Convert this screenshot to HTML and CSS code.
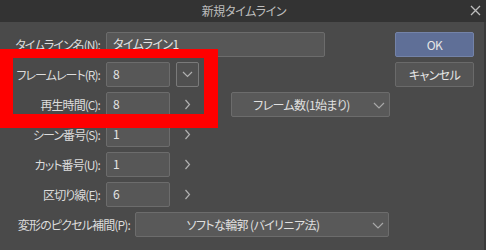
FILE: index.html
```html
<!DOCTYPE html>
<html lang="ja">
<head>
<meta charset="utf-8">
<title>新規タイムライン</title>
<link rel="stylesheet" href="styles.css">
</head>
<body>
<div class="window">
  <div class="titlebar">
    <span class="title">新規タイムライン</span>
    <span class="close">
      <svg width="11" height="11" viewBox="0 0 11 11"><path d="M1 1L10 10M10 1L1 10" stroke="#bdbdbd" stroke-width="1.3" fill="none"/></svg>
    </span>
  </div>
  <div class="content">
    <div class="form">
      <div class="row">
        <label class="label">タイムライン名(N):</label>
        <div class="field wide">タイムライン1</div>
      </div>
      <div class="row">
        <label class="label">フレームレート(R):</label>
        <div class="field num">8</div>
        <div class="iconbtn boxed">
          <svg width="11" height="7" viewBox="0 0 11 7"><path d="M1 1L5.5 5.5L10 1" stroke="#b0b0b0" stroke-width="1.2" fill="none"/></svg>
        </div>
      </div>
      <div class="row">
        <label class="label">再生時間(C):</label>
        <div class="field num">8</div>
        <div class="iconbtn">
          <svg width="7" height="11" viewBox="0 0 7 11"><path d="M1.5 1L5.5 5.5L1.5 10" stroke="#b0b0b0" stroke-width="1.2" fill="none"/></svg>
        </div>
        <div class="select framecount">
          <span class="select-text">フレーム数(1始まり)</span>
          <svg class="arrow" width="12" height="7" viewBox="0 0 12 7"><path d="M1 1L6 6L11 1" stroke="#a8a8a8" stroke-width="1.2" fill="none"/></svg>
        </div>
      </div>
      <div class="row">
        <label class="label">シーン番号(S):</label>
        <div class="field num">1</div>
        <div class="iconbtn">
          <svg width="7" height="11" viewBox="0 0 7 11"><path d="M1.5 1L5.5 5.5L1.5 10" stroke="#b0b0b0" stroke-width="1.2" fill="none"/></svg>
        </div>
      </div>
      <div class="row">
        <label class="label">カット番号(U):</label>
        <div class="field num">1</div>
        <div class="iconbtn">
          <svg width="7" height="11" viewBox="0 0 7 11"><path d="M1.5 1L5.5 5.5L1.5 10" stroke="#b0b0b0" stroke-width="1.2" fill="none"/></svg>
        </div>
      </div>
      <div class="row">
        <label class="label">区切り線(E):</label>
        <div class="field num">6</div>
        <div class="iconbtn">
          <svg width="7" height="11" viewBox="0 0 7 11"><path d="M1.5 1L5.5 5.5L1.5 10" stroke="#b0b0b0" stroke-width="1.2" fill="none"/></svg>
        </div>
      </div>
      <div class="row last">
        <label class="label-free">変形のピクセル補間(P):</label>
        <div class="select interp">
          <span class="select-text">ソフトな輪郭 (バイリニア法)</span>
          <svg class="arrow" width="12" height="7" viewBox="0 0 12 7"><path d="M1 1L6 6L11 1" stroke="#a8a8a8" stroke-width="1.2" fill="none"/></svg>
        </div>
      </div>
    </div>
    <div class="buttons">
      <div class="btn primary">OK</div>
      <div class="btn">キャンセル</div>
    </div>
    <div class="highlight"></div>
  </div>
</div>
</body>
</html>
```

FILE: styles.css
```css
html, body {
  margin: 0;
  padding: 0;
  background: #4a4a4a;
}
body {
  width: 486px;
  height: 250px;
  overflow: hidden;
  font-family: "Noto Sans CJK JP", "Noto Sans", sans-serif;
  font-size: 12px;
  font-feature-settings: "palt";
  letter-spacing: -0.6px;
  color: #dedede;
}
.window {
  width: 486px;
  height: 250px;
  display: flex;
  flex-direction: column;
}
.titlebar {
  height: 22px;
  flex: none;
  background: #333333;
  display: flex;
  align-items: center;
  justify-content: center;
  position: relative;
}
.title {
  color: #bdbdbd;
  font-size: 12px;
  line-height: 22px;
  margin-left: 2px;
  letter-spacing: -0.3px;
}
.close {
  position: absolute;
  right: 5px;
  top: 5px;
  width: 11px;
  height: 11px;
  display: flex;
}
.content {
  flex: 1;
  position: relative;
  display: flex;
  padding: 10px 0 0 0;
  border-right: 2px solid #3a3a3a;
}
.form {
  display: flex;
  flex-direction: column;
  gap: 5px;
}
.row {
  display: flex;
  align-items: center;
  height: 25px;
}
.label {
  width: 100px;
  text-align: right;
  margin-right: 6px;
  white-space: nowrap;
  color: #dcdcdc;
  letter-spacing: -0.95px;
}
.label-free {
  width: 130px;
  text-align: right;
  margin-right: 5px;
  white-space: nowrap;
  color: #dcdcdc;
  letter-spacing: -0.85px;
}
.field {
  box-sizing: border-box;
  height: 25px;
  background: #575757;
  border: 1px solid #6c6c6c;
  border-radius: 2px;
  padding-left: 6px;
  line-height: 22px;
  color: #e4e4e4;
}
.field.wide { width: 219px; }
.field.num { width: 64px; }
.iconbtn {
  box-sizing: border-box;
  width: 23px;
  height: 25px;
  margin-left: 6px;
  display: flex;
  align-items: center;
  justify-content: center;
}
.iconbtn.boxed {
  border: 1px solid #7a7a7a;
  border-radius: 2px;
  background: #505050;
}
.select {
  box-sizing: border-box;
  height: 25px;
  background: #595959;
  border: 1px solid #6c6c6c;
  border-radius: 2px;
  display: flex;
  align-items: center;
  position: relative;
}
.select-text {
  flex: 1;
  text-align: center;
  padding-right: 18px;
  white-space: nowrap;
  color: #e0e0e0;
}
.select .arrow {
  position: absolute;
  right: 4px;
  top: 9px;
}
.framecount {
  width: 159px;
  margin-left: 32px;
}
.interp {
  width: 254px;
}
.buttons {
  margin-left: auto;
  margin-right: 10px;
  display: flex;
  flex-direction: column;
  gap: 5px;
}
.btn {
  box-sizing: border-box;
  width: 79px;
  height: 25px;
  border: 1px solid #6a6a6a;
  border-radius: 2px;
  background: #555555;
  display: flex;
  align-items: center;
  justify-content: center;
  color: #e6e6e6;
}
.btn.primary {
  background: #5f6f97;
  border-color: #7483a8;
}
.highlight {
  position: absolute;
  left: 0;
  top: 27px;
  width: 218px;
  height: 79px;
  box-sizing: border-box;
  border-style: solid;
  border-color: #ff0000;
  border-width: 9px 14px 14px 13px;
  pointer-events: none;
}
```
